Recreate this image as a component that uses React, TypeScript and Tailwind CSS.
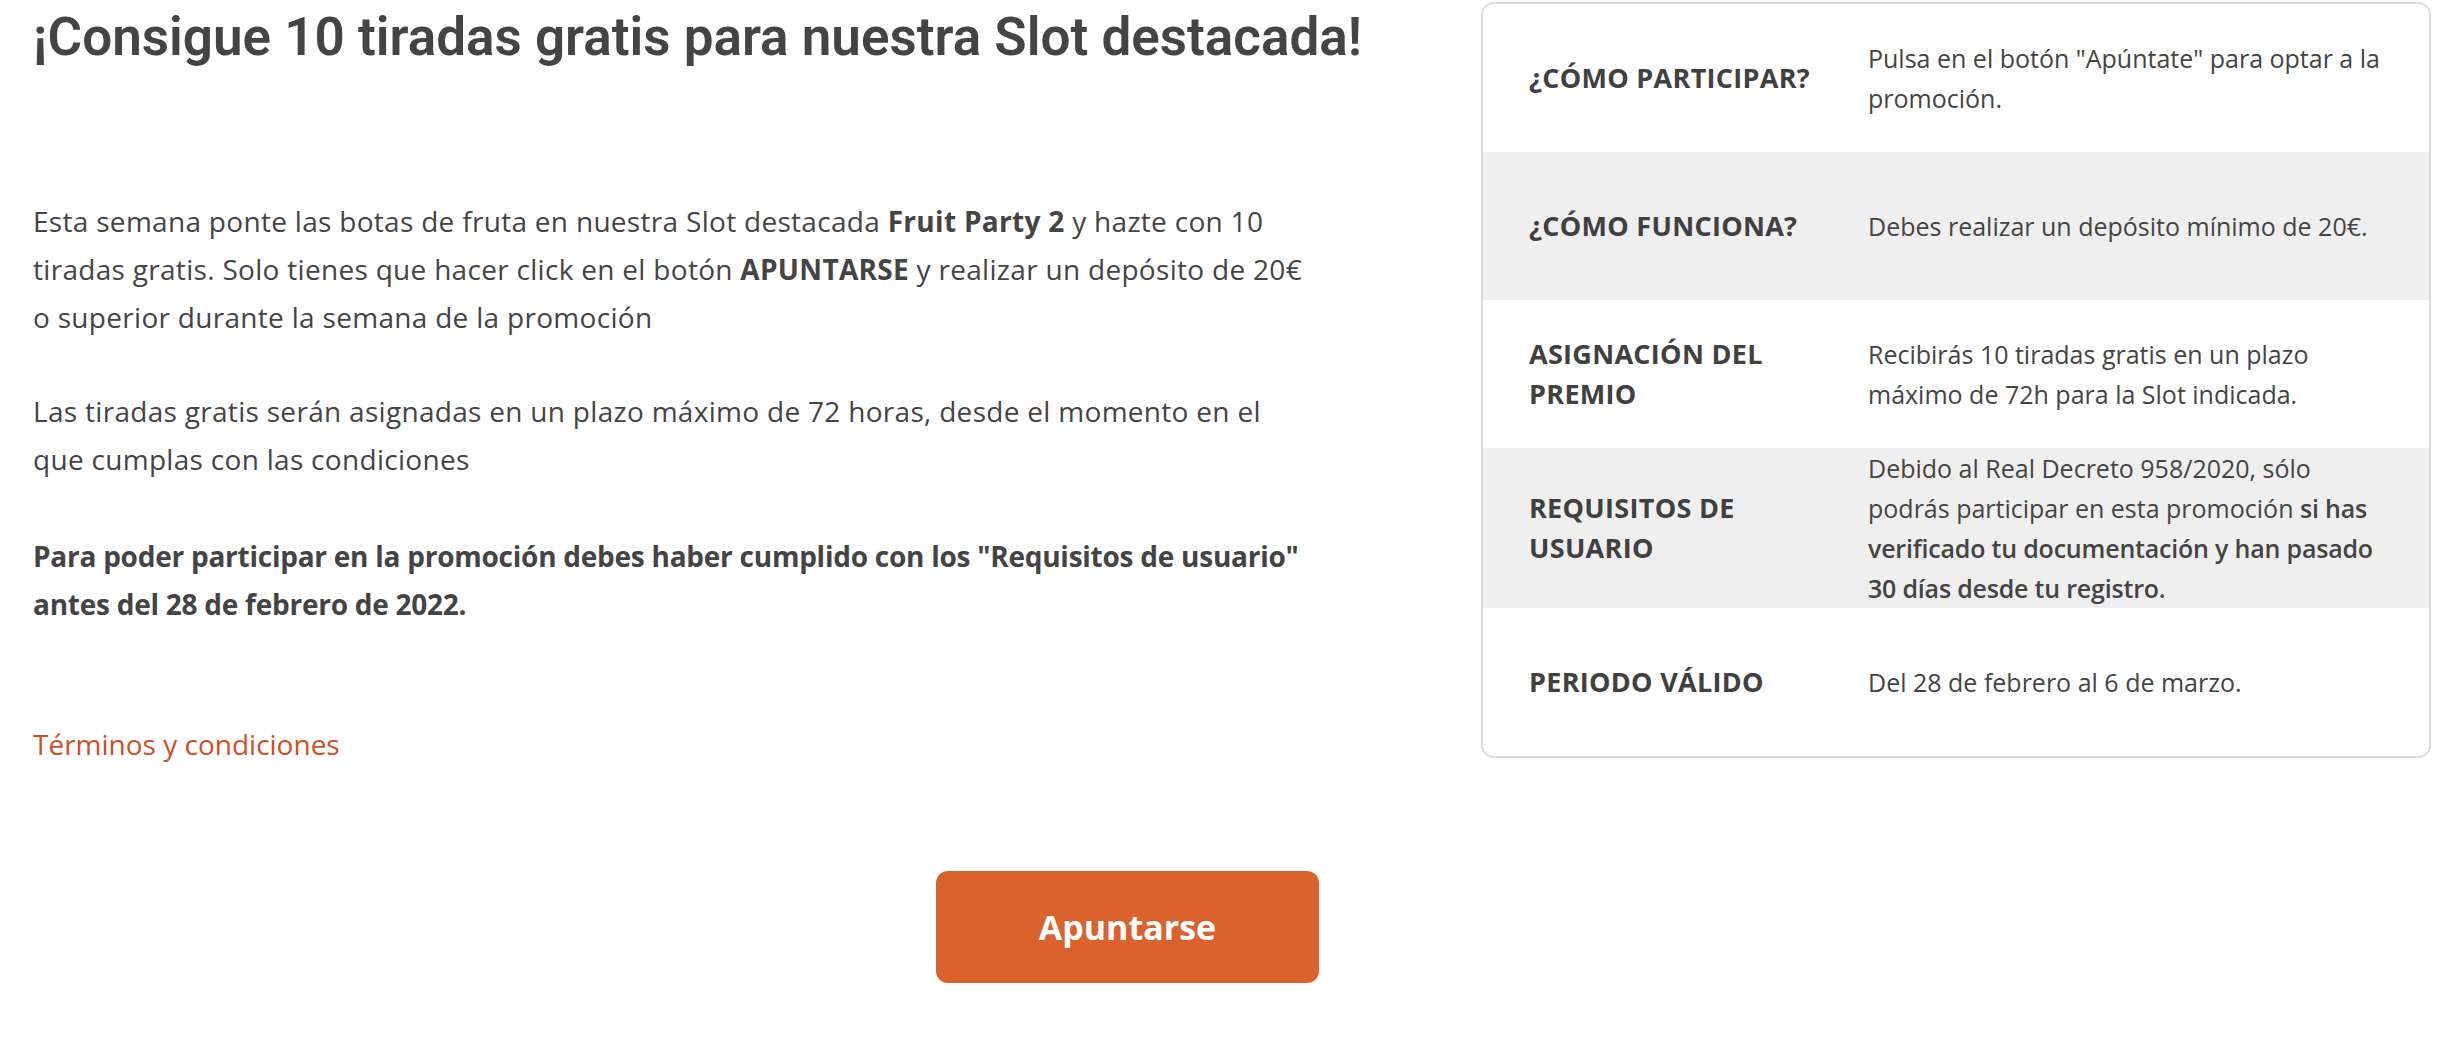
const rows = [
  {
    label: "¿CÓMO PARTICIPAR?",
    value: <>Pulsa en el botón "Apúntate" para optar a la promoción.</>,
    gray: false,
  },
  {
    label: "¿CÓMO FUNCIONA?",
    value: <>Debes realizar un depósito mínimo de 20€.</>,
    gray: true,
  },
  {
    label: "ASIGNACIÓN DEL PREMIO",
    value: <>Recibirás 10 tiradas gratis en un plazo máximo de 72h para la Slot indicada.</>,
    gray: false,
  },
  {
    label: "REQUISITOS DE USUARIO",
    value: (
      <>
        Debido al Real Decreto 958/2020, sólo podrás participar en esta promoción{" "}
        <b className="font-semibold tracking-[-0.2px]">
          si has verificado tu documentación y han pasado 30 días desde tu registro.
        </b>
      </>
    ),
    gray: true,
  },
  {
    label: "PERIODO VÁLIDO",
    value: <>Del 28 de febrero al 6 de marzo.</>,
    gray: false,
  },
];

export default function App() {
  return (
    <div className="min-h-[1040px] bg-white text-[#444444] font-['Open_Sans',sans-serif]">
      <div className="flex justify-between pl-[33px] pr-[21px] pt-[2px]">
        <div className="w-[1277px]">
          <h1 className="mt-[3px] mb-[128px] font-['Roboto',sans-serif] text-[53px] leading-[64px] font-semibold whitespace-nowrap">
            ¡Consigue 10 tiradas gratis para nuestra Slot destacada!
          </h1>
          <div className="text-[28px] leading-[48px] tracking-[0.3px]">
            <p className="mb-[46px]">
              Esta semana ponte las botas de fruta en nuestra Slot destacada <b className="font-bold">Fruit Party 2</b> y
              hazte con 10 tiradas gratis. Solo tienes que hacer click en el botón <b className="font-bold">APUNTARSE</b> y
              realizar un depósito de 20€ o superior durante la semana de la promoción
            </p>
            <p className="mb-[49px]">
              Las tiradas gratis serán asignadas en un plazo máximo de 72 horas, desde el momento en el que cumplas con
              las condiciones
            </p>
            <p className="mb-[92px] font-bold tracking-[-0.25px]">
              Para poder participar en la promoción debes haber cumplido con los "Requisitos de usuario" antes del 28 de
              febrero de 2022.
            </p>
            <a href="#" className="text-[#cf4f26] tracking-normal">
              Términos y condiciones
            </a>
          </div>
          <button className="mt-[103px] ml-[903px] w-[383px] h-[112px] rounded-[12px] bg-[#da632d] text-white text-[34px] font-bold">
            Apuntarse
          </button>
        </div>

        <div className="w-[950px] self-start border-2 border-[#dcdcdc] rounded-[13px] overflow-hidden">
          {rows.map((r) => (
            <div
              key={r.label}
              className={`flex items-center min-h-[148px] ${r.gray ? "bg-[#efefef]" : "bg-white"}`}
            >
              <div className="w-[385px] shrink-0 pl-[46px] pr-[30px] text-[27px] leading-[40px] tracking-[0.3px] font-bold text-[#404040]">
                {r.label}
              </div>
              <div className="flex-1 pr-[34px] text-[25px] leading-[40px]">{r.value}</div>
            </div>
          ))}
        </div>
      </div>
    </div>
  );
}
